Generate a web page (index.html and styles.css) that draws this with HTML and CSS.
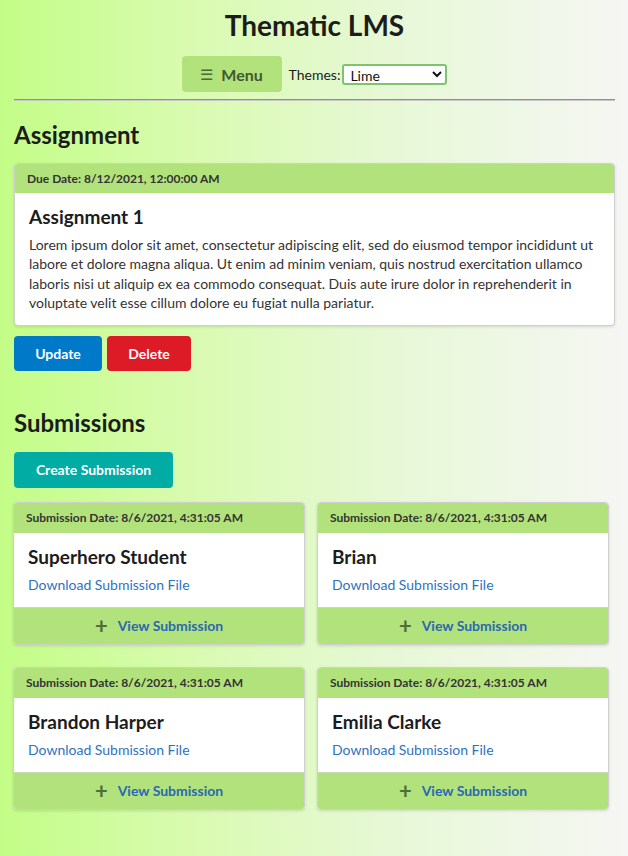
FILE: index.html
```html
<!DOCTYPE html>
<html>
<head>
<meta charset="utf-8">
<link rel="stylesheet" href="styles.css">
</head>
<body>
<div class="page">
  <header class="top">
    <h1 class="title">Thematic LMS</h1>
    <div class="toolbar">
      <button class="menu-btn"><span class="burger">&#9776;</span>Menu</button>
      <label class="themes">Themes:
        <select class="theme-select"><option>Lime</option></select>
      </label>
    </div>
  </header>
  <hr class="rule">
  <h2 class="section-title">Assignment</h2>
  <div class="card assign-card">
    <div class="card-head">Due Date: 8/12/2021, 12:00:00 AM</div>
    <div class="card-body">
      <h3 class="card-title">Assignment 1</h3>
      <p class="desc">Lorem ipsum dolor sit amet, consectetur adipiscing elit, sed do eiusmod tempor incididunt ut labore et dolore magna aliqua. Ut enim ad minim veniam, quis nostrud exercitation ullamco laboris nisi ut aliquip ex ea commodo consequat. Duis aute irure dolor in reprehenderit in voluptate velit esse cillum dolore eu fugiat nulla pariatur.</p>
    </div>
  </div>
  <div class="actions">
    <button class="btn btn-blue">Update</button>
    <button class="btn btn-red">Delete</button>
  </div>
  <h2 class="section-title subs-title">Submissions</h2>
  <button class="btn btn-teal">Create Submission</button>
  <div class="grid">
    <div class="card sub-card">
      <div class="card-head">Submission Date: 8/6/2021, 4:31:05 AM</div>
      <div class="card-body sub-body">
        <h3 class="card-title">Superhero Student</h3>
        <a class="dl" href="#">Download Submission File</a>
      </div>
      <div class="card-foot"><span class="plus">+</span><a class="view" href="#">View Submission</a></div>
    </div>
    <div class="card sub-card">
      <div class="card-head">Submission Date: 8/6/2021, 4:31:05 AM</div>
      <div class="card-body sub-body">
        <h3 class="card-title">Brian</h3>
        <a class="dl" href="#">Download Submission File</a>
      </div>
      <div class="card-foot"><span class="plus">+</span><a class="view" href="#">View Submission</a></div>
    </div>
    <div class="card sub-card">
      <div class="card-head">Submission Date: 8/6/2021, 4:31:05 AM</div>
      <div class="card-body sub-body">
        <h3 class="card-title">Brandon Harper</h3>
        <a class="dl" href="#">Download Submission File</a>
      </div>
      <div class="card-foot"><span class="plus">+</span><a class="view" href="#">View Submission</a></div>
    </div>
    <div class="card sub-card">
      <div class="card-head">Submission Date: 8/6/2021, 4:31:05 AM</div>
      <div class="card-body sub-body">
        <h3 class="card-title">Emilia Clarke</h3>
        <a class="dl" href="#">Download Submission File</a>
      </div>
      <div class="card-foot"><span class="plus">+</span><a class="view" href="#">View Submission</a></div>
    </div>
  </div>
</div>
</body>
</html>
```

FILE: styles.css
```css
html, body {
  margin: 0;
  padding: 0;
  height: 100%;
}
body {
  font-family: Lato, "Open Sans", sans-serif;
  color: #1c1c1c;
  background: linear-gradient(to right, #c3fd87 0%, #d9fbb0 30%, #e6f8d4 60%, #f6f6f4 100%);
  background-attachment: fixed;
}
.page {
  padding: 0 13px 0 14px;
}
.top {
  text-align: center;
}
.title {
  margin: 0;
  padding-top: 8px;
  font-size: 28px;
  line-height: 34px;
  font-weight: 700;
  color: #1c1c1c;
}
.toolbar {
  margin-top: 14px;
  display: flex;
  justify-content: center;
  align-items: center;
  gap: 7px;
}
.menu-btn {
  font-family: inherit;
  width: 100px;
  height: 36px;
  border: none;
  border-radius: 4px;
  background: #b2e27c;
  color: #3f5a2e;
  font-size: 16px;
  font-weight: 700;
  display: flex;
  align-items: center;
  justify-content: center;
  gap: 8px;
  padding: 0;
}
.burger {
  font-size: 15px;
  font-weight: 400;
  color: #4a6a36;
}
.themes {
  font-size: 14px;
  color: #1c1c1c;
  display: flex;
  align-items: center;
  gap: 2px;
}
.theme-select {
  font-family: Lato, sans-serif;
  font-size: 14px;
  width: 105px;
  height: 21px;
  border: 2px solid #7dc46a;
  border-radius: 3px;
  background: #fff;
  color: #111;
  padding: 0 2px;
}
.rule {
  margin: 7px 0 0;
  border: none;
  border-top: 1px solid #8f8f8f;
  border-bottom: 1px solid #c9c9c9;
}
.section-title {
  margin: 19px 0 0;
  font-size: 24px;
  line-height: 30px;
  font-weight: 700;
  color: #1c1c1c;
}
.subs-title {
  margin-top: 37px;
}
.card {
  background: #fff;
  border: 1px solid #cfcfcf;
  border-radius: 4px;
  overflow: hidden;
  box-shadow: 0 1px 3px rgba(0,0,0,0.12);
}
.assign-card {
  margin-top: 13px;
}
.card-head {
  background: #b2e27c;
  height: 29px;
  line-height: 29px;
  padding: 0 12px;
  font-size: 12px;
  font-weight: 700;
  color: #333;
}
.card-body {
  padding: 12px 14px 12px;
}
.card-title {
  margin: 0;
  font-size: 19px;
  line-height: 24px;
  font-weight: 700;
  color: #1c1c1c;
}
.desc {
  margin: 6px 0 0;
  font-size: 14px;
  line-height: 19.4px;
  color: #333;
}
.actions {
  margin-top: 10px;
  display: flex;
  gap: 5px;
}
.btn {
  font-family: inherit;
  border: none;
  border-radius: 4px;
  color: #fff;
  font-size: 14px;
  font-weight: 700;
  height: 35px;
  padding: 0;
}
.btn-blue {
  background: #0079c8;
  width: 88px;
}
.btn-red {
  background: #dc1b27;
  width: 84px;
}
.btn-teal {
  display: block;
  margin-top: 14px;
  background: #00aca4;
  width: 159px;
  height: 36px;
}
.grid {
  margin: 14px 6px 0 -1px;
  display: grid;
  grid-template-columns: 1fr 1fr;
  column-gap: 12px;
  row-gap: 22px;
}
.sub-card .card-head {
  height: 30px;
  line-height: 30px;
}
.sub-body {
  padding: 12px 14px 12px;
}
.dl {
  display: block;
  margin-top: 6px;
  font-size: 14px;
  line-height: 20px;
  color: #2f72c0;
  text-decoration: none;
}
.card-foot {
  background: #b2e27c;
  border-top: 1px solid #c8d9b8;
  height: 36px;
  display: flex;
  align-items: center;
  justify-content: center;
  gap: 10px;
}
.plus {
  font-size: 22px;
  font-weight: 700;
  color: #4f6e3a;
  line-height: 1;
}
.view {
  font-size: 14px;
  font-weight: 700;
  color: #2b68b3;
  text-decoration: none;
}
```
